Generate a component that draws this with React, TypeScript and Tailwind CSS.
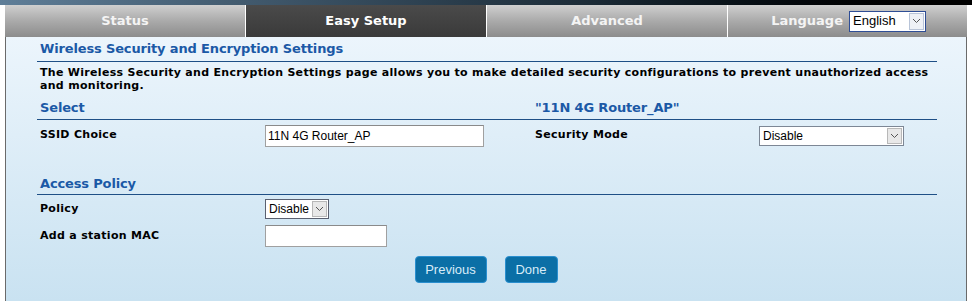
import { ReactNode } from "react";

const VERDANA = "font-['DejaVu_Sans',Verdana,sans-serif]";
const TAHOMA = "font-['Liberation_Sans',Tahoma,sans-serif]";

function Chevron() {
  return (
    <svg width="9" height="6" viewBox="0 0 9 6" className="block">
      <path d="M1 1 L4.5 4.5 L8 1" fill="none" stroke="#555" strokeWidth="1" />
    </svg>
  );
}

function FakeSelect({ value, width, border }: { value: string; width: string; border: string }) {
  return (
    <div className={`flex h-[20px] items-stretch border bg-white ${width} ${border}`}>
      <span className={`flex flex-1 items-center pl-[3px] text-[12px] text-black ${TAHOMA}`}>{value}</span>
      <span className="m-px flex w-[15px] items-center justify-center border border-[#b8b8b8] bg-[#e8e8e8]">
        <Chevron />
      </span>
    </div>
  );
}

function TextBox({ value, width }: { value?: string; width: string }) {
  return (
    <div
      className={`flex h-[22px] items-center border border-[#a0a0a0] border-t-[#8a8a8a] bg-white pl-[2px] text-[12px] text-black ${TAHOMA} ${width}`}
    >
      {value}
    </div>
  );
}

function SectionHead({ children, right, height }: { children: ReactNode; right?: ReactNode; height: string }) {
  return (
    <div className={`grid grid-cols-[495px_1fr] items-center border-b border-[#1e4f86] pl-[3px] ${height}`}>
      <span className="text-[13px] font-bold tracking-[-0.15px] text-[#1b59a6]">{children}</span>
      {right && <span className="text-[13px] font-bold tracking-[-0.15px] text-[#1b59a6]">{right}</span>}
    </div>
  );
}

function Label({ children }: { children: ReactNode }) {
  return <span className="text-[11px] font-bold tracking-[0.3px] text-black">{children}</span>;
}

function Tab({ label, active }: { label: string; active?: boolean }) {
  return (
    <div
      className={`flex items-center justify-center text-[13px] font-bold ${
        active
          ? "bg-gradient-to-b from-[#4a4a4a] to-[#3a3a3a] text-white"
          : "bg-gradient-to-b from-[#cfcfcf] via-[#aaaaaa] to-[#8c8c8c] text-[#f4f4f4]"
      }`}
    >
      {label}
    </div>
  );
}

export default function App() {
  return (
    <div className={`h-[301px] w-[972px] overflow-hidden bg-white ${VERDANA}`}>
      <div className="h-[5px] bg-gradient-to-r from-[#5f7e98] via-[#1c2c38] via-60% to-black" />
      <div className="mx-[5px]">
        <nav className="grid h-[32px] grid-cols-[240px_240px_240px_1fr] gap-px bg-white">
          <Tab label="Status" />
          <Tab label="Easy Setup" active />
          <Tab label="Advanced" />
          <div className="flex items-center justify-end gap-[6px] bg-gradient-to-b from-[#cfcfcf] via-[#aaaaaa] to-[#8c8c8c] pr-[41px]">
            <span className="text-[13px] font-bold text-[#f4f4f4]">Language</span>
            <div className="flex h-[21px] w-[77px] items-stretch border border-[#2e4d95] bg-white">
              <span className={`flex flex-1 items-center pl-[3px] text-[13px] text-black ${TAHOMA}`}>English</span>
              <span className="m-px flex w-[15px] items-center justify-center border border-[#b8c4d8] bg-[#eef1f6]">
                <Chevron />
              </span>
            </div>
          </div>
        </nav>
        <main className="h-[264px] border-x border-[#6a6a6a] bg-gradient-to-b from-[#ecf5fc] to-[#c9e2f1] pl-[31px] pr-[29px]">
          <SectionHead height="h-[25px]">Wireless Security and Encryption Settings</SectionHead>
          <p className="pl-[3px] pt-[4px] text-[11px] font-bold leading-[13px] tracking-[0.3px] text-black">
            The Wireless Security and Encryption Settings page allows you to make detailed security configurations to
            prevent unauthorized access and monitoring.
          </p>
          <div className="h-[5px]" />
          <SectionHead height="h-[23px]" right={'"11N 4G Router_AP"'}>
            Select
          </SectionHead>
          <div className="grid h-[31px] grid-cols-[225px_270px_224px_1fr] items-center pl-[3px]">
            <Label>SSID Choice</Label>
            <TextBox value="11N 4G Router_AP" width="w-[219px]" />
            <Label>Security Mode</Label>
            <FakeSelect value="Disable" width="w-[145px]" border="border-[#7d8795]" />
          </div>
          <div className="h-[23px]" />
          <SectionHead height="h-[21px]">Access Policy</SectionHead>
          <div className="grid h-[28px] grid-cols-[225px_1fr] items-center pl-[3px]">
            <Label>Policy</Label>
            <FakeSelect value="Disable" width="w-[64px]" border="border-[#5a6070]" />
          </div>
          <div className="grid h-[26px] grid-cols-[225px_1fr] items-center pl-[3px]">
            <Label>Add a station MAC</Label>
            <TextBox width="w-[122px]" />
          </div>
          <div className="flex justify-center gap-[18px] pr-[2px] pt-[7px]">
            <button
              className={`h-[27px] w-[72px] rounded-[4px] border border-[#2a8fcf] bg-[#0b6fa6] text-[13px] text-[#d8ecf8] ${TAHOMA}`}
            >
              Previous
            </button>
            <button
              className={`h-[27px] w-[53px] rounded-[4px] border border-[#2a8fcf] bg-[#0b6fa6] text-[13px] text-[#d8ecf8] ${TAHOMA}`}
            >
              Done
            </button>
          </div>
        </main>
      </div>
    </div>
  );
}
